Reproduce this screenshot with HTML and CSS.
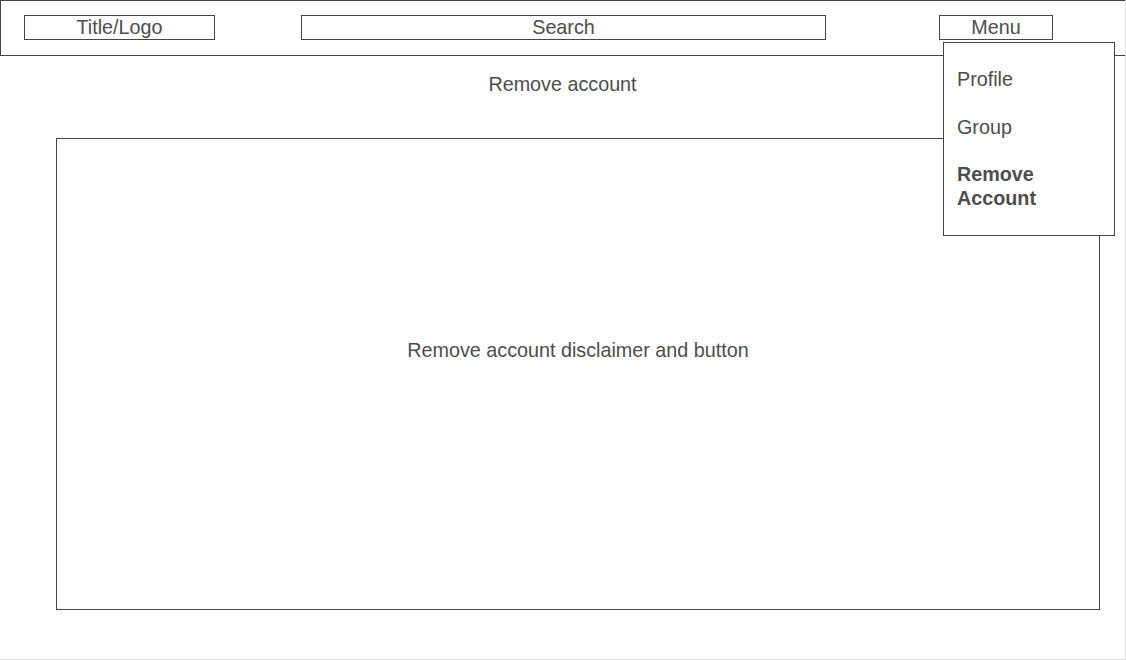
FILE: index.html
```html
<!DOCTYPE html>
<html>
<head>
<meta charset="utf-8">
<title>Remove account</title>
<link rel="stylesheet" href="styles.css">
</head>
<body>
<div class="page">
  <header class="topbar">
    <div class="box title">Title/Logo</div>
    <div class="box search">Search</div>
    <div class="box menu">Menu</div>
  </header>
  <div class="page-label">Remove account</div>
  <main class="content">Remove account disclaimer and button</main>
  <nav class="dropdown">
    <div class="item">Profile</div>
    <div class="item">Group</div>
    <div class="item active">Remove Account</div>
  </nav>
</div>
</body>
</html>
```
FILE: styles.css
```css
* { box-sizing: border-box; }
html, body { margin: 0; padding: 0; background: #fff; }
body {
  font-family: "Liberation Sans", Arial, sans-serif;
  font-size: 19.75px;
  color: #4d4d4d;
}
.page {
  position: relative;
  width: 1126px;
  height: 660px;
  border-right: 1px solid #dcdcdc;
  border-bottom: 1px solid #dcdcdc;
  overflow: hidden;
}
.topbar {
  display: flex;
  align-items: flex-start;
  width: 1126px;
  height: 56px;
  border: 1px solid #444;
  padding: 14px 0 0 23px;
}
.box {
  height: 25px;
  border: 1px solid #444;
  line-height: 23px;
  text-align: center;
  background: #fff;
}
.title { width: 191px; }
.search { width: 525px; margin-left: 86px; }
.menu { width: 114px; margin-left: 113px; }
.page-label {
  text-align: center;
  line-height: 23px;
  margin-top: 17px;
}
.content {
  display: flex;
  align-items: center;
  justify-content: center;
  width: 1044px;
  height: 472px;
  margin: 42px 0 0 56px;
  padding-bottom: 47px;
  border: 1px solid #444;
}
.dropdown {
  position: absolute;
  left: 943px;
  top: 42px;
  width: 172px;
  height: 194px;
  border: 1px solid #444;
  background: #fff;
  padding: 24px 20px 0 13px;
  display: flex;
  flex-direction: column;
  gap: 24px;
}
.item { line-height: 24px; }
.item.active { font-weight: bold; margin-top: -1px; }
```
